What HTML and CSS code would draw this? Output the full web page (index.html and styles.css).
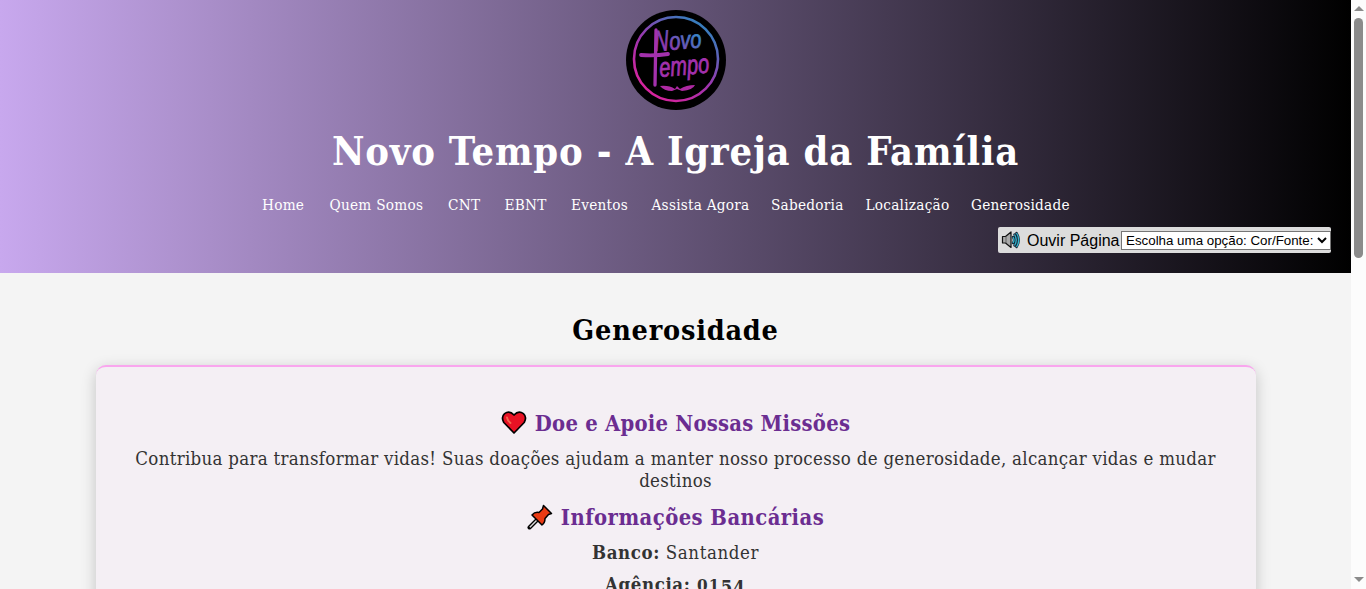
FILE: index.html
```html
<!DOCTYPE html>
<html lang="pt-BR">
<head>
<meta charset="utf-8">
<title>Novo Tempo - Generosidade</title>
<link rel="stylesheet" href="styles.css">
</head>
<body>
<div class="page">
  <header class="header">
    <svg class="logo" viewBox="0 0 100 100" role="img" aria-label="Novo Tempo">
      <defs>
        <linearGradient id="brand" gradientUnits="userSpaceOnUse" x1="24" y1="90" x2="76" y2="14">
          <stop offset="0" stop-color="#e0219b"/>
          <stop offset=".5" stop-color="#9c35ae"/>
          <stop offset="1" stop-color="#357fbd"/>
        </linearGradient>
        <linearGradient id="words" gradientUnits="userSpaceOnUse" x1="34" y1="66" x2="74" y2="30">
          <stop offset="0" stop-color="#a62fac"/>
          <stop offset=".5" stop-color="#8a3db0"/>
          <stop offset="1" stop-color="#3a84c6"/>
        </linearGradient>
      </defs>
      <circle cx="50" cy="50" r="50"/>
      <circle cx="50" cy="49" r="42" fill="none" stroke="url(#brand)" stroke-width="2.6"/>
      <g class="logo-text" fill="url(#words)" stroke="url(#words)">
        <text x="29" y="41" font-size="29" textLength="14" lengthAdjust="spacingAndGlyphs" transform="rotate(-3 29 41)">N</text>
        <text x="44" y="40" font-size="25" textLength="32" lengthAdjust="spacingAndGlyphs" transform="rotate(-5 44 40)">ovo</text>
        <text x="34" y="67" font-size="27" textLength="50" lengthAdjust="spacingAndGlyphs" transform="rotate(-5 34 67)" fill="#a331ad" stroke="#a331ad">empo</text>
      </g>
      <g fill="none" stroke="#a331ad" stroke-linecap="round">
        <path d="M30 20L29 75" stroke-width="3.3"/>
        <path d="M15 45Q29 46 42 44" stroke-width="3.8"/>
      </g>
      <path d="M34 76Q43 75 49 79L51 76L54 79Q60 75 69 75Q67 80 56 81L51 79L46 81Q38 81 34 76Z" fill="#ae29a3"/>
    </svg>
    <h1 class="title">Novo Tempo - A Igreja da Família</h1>
    <nav class="nav">
      <a class="w44">Home</a><a class="w95">Quem Somos</a><a class="w33">CNT</a><a class="w43">EBNT</a><a class="w57">Eventos</a><a class="w96">Assista Agora</a><a class="w71">Sabedoria</a><a class="w82">Localização</a><a class="w98">Generosidade</a>
    </nav>
    <div class="tools">
      <svg class="speaker" viewBox="0 0 20 20">
        <path d="M1.500 6.500H4.500L10 2V17.500L4.500 13H1.500Z" fill="#aaa" stroke="#111" stroke-width="1.200" stroke-linejoin="round"/>
        <path d="M5 6.500V13" stroke="#555" stroke-width=".8"/>
        <path d="M12 7Q14 10 12 13M13.500 4.500Q17 10 13.500 15.500M15.500 3Q20 10 15.500 17" fill="none" stroke="#123" stroke-width="2.400" stroke-linecap="round"/>
        <path d="M12 7Q14 10 12 13M13.500 4.500Q17 10 13.500 15.500M15.500 3Q20 10 15.500 17" fill="none" stroke="#35b4cc" stroke-width="1.300"/>
      </svg>
      <span class="listen">Ouvir Página</span>
      <select class="options"><option>Escolha uma opção: Cor/Fonte:</option></select>
    </div>
  </header>
  <main class="main">
    <h2 class="heading">Generosidade</h2>
    <section class="card">
      <h3 class="sub">
        <svg class="emoji" viewBox="0 0 26 26"><path d="M13 23L2.800 12.500Q-.2 7 3.600 3.600Q8.500 0 13 5Q17.500 0 22.400 3.600Q26.200 7 23.200 12.500Z" fill="#e81224" stroke="#000" stroke-width="1.700" stroke-linejoin="round"/><path d="M6 7.500Q6.500 11 9.500 13" fill="none" stroke="#f4684d" stroke-width="1.900" stroke-linecap="round"/></svg>
        <span>Doe e Apoie Nossas Missões</span>
      </h3>
      <p class="lead"><span>Contribua para transformar vidas! Suas doações ajudam a manter nosso processo de generosidade, alcançar vidas e mudar</span> <span>destinos</span></p>
      <h3 class="sub sub-bank">
        <svg class="emoji" viewBox="0 0 26 26"><path d="M10.500 15.500L2.500 23.500" stroke="#000" stroke-width="4" stroke-linecap="round"/><path d="M10.500 15.500L2.800 23.200" stroke="#ddd" stroke-width="1.400"/><path d="M16.500 1.500L24.500 9.500L21.500 10.500L18 14.500Q18 19 15 21L5 11Q8 7.500 12 8.500L15.500 5Z" fill="#e93a13" stroke="#000" stroke-width="1.500" stroke-linejoin="round"/></svg>
        <span>Informações Bancárias</span>
      </h3>
      <p class="info"><b>Banco:</b> Santander</p>
      <p class="info"><b>Agência: <span class="low">01</span><span class="drop">54</span></b></p>
    </section>
  </main>
</div>
<div class="scrollbar"><i class="up"></i><i class="thumb"></i><i class="down"></i></div>
</body>
</html>
```
FILE: styles.css
```css
* { box-sizing: border-box; }
body { margin: 0; height: 589px; display: flex; overflow: hidden; background: #f4f4f4; font-family: Georgia, "DejaVu Serif Condensed", "DejaVu Serif", serif; font-stretch: condensed; }
.page { width: 1351px; height: 589px; overflow: hidden; }
h1, h2, h3, p { margin: 0; white-space: nowrap; }
.header { height: 273px; padding-top: 10px; display: flex; flex-direction: column; align-items: center; background: linear-gradient(to right, #c8a8ee, #000); color: #fff; }
.logo { width: 100px; height: 100px; flex: none; }
.logo-text { font-family: "Liberation Sans", sans-serif; font-style: italic; stroke-width: .8; }
.title { margin-top: 17px; height: 48px; line-height: 48px; font-size: 39.5px; letter-spacing: .8px; }
.nav { margin-top: 20px; width: 827px; display: flex; gap: 23.5px; height: 20px; line-height: 20px; font-size: 15.2px; letter-spacing: .25px; white-space: nowrap; }
.nav a { flex: none; }
.w44 { width: 44px; } .w95 { width: 95px; } .w33 { width: 33px; } .w43 { width: 43px; } .w57 { width: 57px; } .w96 { width: 96px; } .w71 { width: 71px; } .w82 { width: 82px; } .w98 { width: 98px; }
.tools { align-self: flex-end; margin: 12px 20px 0 0; width: 333px; height: 26px; padding-left: 3px; border-radius: 2px; background: #dcdcdc; color: #000; display: flex; align-items: center; font: 16px "Liberation Sans", Arial, sans-serif; white-space: nowrap; }
.speaker { width: 20px; height: 20px; flex: none; }
.listen { margin-left: 6px; width: 94px; padding-top: 1px; flex: none; }
.options { width: 210px; height: 19px; flex: none; padding: 0; font: 13.333px "Liberation Sans", Arial, sans-serif; background: #fff; color: #000; border: 1px solid #767676; border-radius: 0; }
.main { padding-top: 40px; display: flex; flex-direction: column; align-items: center; }
.heading { height: 34px; line-height: 34px; font-size: 28.5px; letter-spacing: .8px; color: #000; }
.card { margin-top: 18px; width: 1160px; height: 400px; padding: 42px 38px 0; border-top: 2px solid #f9a6ee; border-radius: 10px; background: #f4eff4; box-shadow: 0 4px 15px rgba(0,0,0,.2); text-align: center; color: #333; font-size: 18.5px; }
.sub { height: 28px; display: flex; justify-content: center; align-items: center; gap: 8px; font-size: 21.8px; letter-spacing: .25px; color: #6b2d91; }
.sub-bank { letter-spacing: .45px; }
.emoji { width: 26px; height: 26px; flex: none; }
.lead { margin: 11px 0 9px; height: 46px; line-height: 22px; letter-spacing: .3px; display: flex; flex-direction: column; align-items: center; }
.info { height: 22px; line-height: 22px; margin-top: 10px; letter-spacing: .6px; }
.sub-bank + .info { margin-top: 11px; }
.low { font-size: 17px; letter-spacing: 1.3px; }
.drop { position: relative; top: 3px; letter-spacing: 1px; }
.scrollbar { width: 15px; height: 589px; background: #fcfcfc; display: flex; flex-direction: column; align-items: center; padding: 6px 0 7px; }
.up, .down { border-left: 5px solid transparent; border-right: 5px solid transparent; }
.up { border-bottom: 5px solid #8b8b8b; }
.down { margin-top: auto; border-top: 5px solid #8b8b8b; }
.thumb { margin-top: 7px; width: 9px; height: 240px; border-radius: 5px; background: #8b8b8b; }
```
